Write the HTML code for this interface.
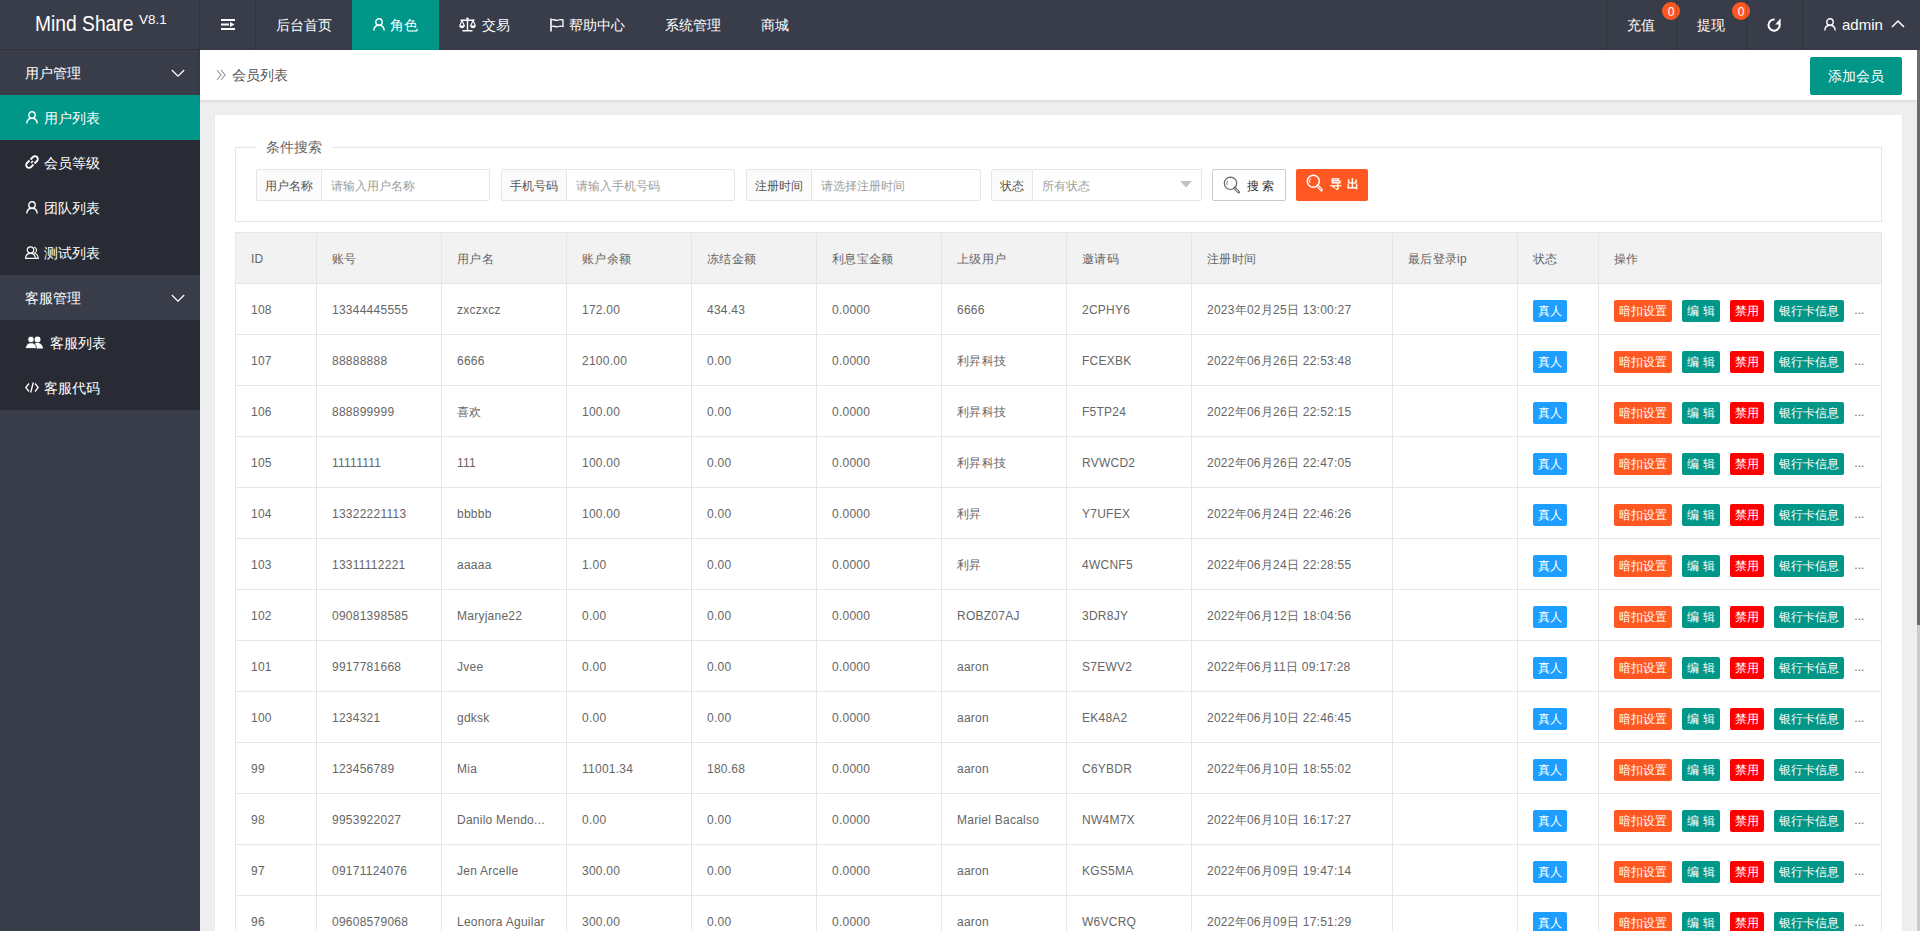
<!DOCTYPE html>
<html><head><meta charset="utf-8"><title>Mind Share</title>
<style>
*{box-sizing:border-box}
html,body{margin:0;padding:0}
body{width:1920px;height:931px;overflow:hidden;position:relative;background:#EEEEEE;font-family:"Liberation Sans",sans-serif;color:#666}
.abs{position:absolute}
#hd{left:0;top:0;width:1920px;height:50px;background:#393D49;color:#fff}
#hd .t{position:absolute;top:0;height:50px;line-height:50px;font-size:14px;color:#fff;white-space:nowrap}
#hd .sep{position:absolute;top:0;width:1px;height:50px;background:rgba(0,0,0,.16);z-index:2}
#logo{left:0;width:200px;text-align:center;font-size:20px!important}
#logo sup{font-size:12px;position:relative;top:-2px;margin-left:4px;font-weight:bold}
svg{display:block}
#sd{left:0;top:50px;width:200px;height:881px;background:#393D49}
#sd .it{position:absolute;left:0;width:200px;height:45px;line-height:47px;font-size:14px;color:#fff;white-space:nowrap}
#sd .dk{background:#282B33}
#sd .on{background:#009688}
#sd .it .tx{position:absolute;left:44px;top:0}
#sd .it svg{position:absolute}
#bc{left:200px;top:50px;width:1717px;height:50px;background:#fff;box-shadow:0 1px 3px rgba(0,0,0,.12)}
#card{left:215px;top:115px;width:1687px;height:830px;background:#fff;box-shadow:0 1px 2px rgba(0,0,0,.05)}
#fs{left:235px;top:147px;width:1647px;height:75px;border:1px solid #e6e6e6}
#lg{left:256px;top:138px;height:18px;line-height:18px;padding:0 10px;background:#fff;font-size:14px;color:#666}
.lab{position:absolute;top:169px;height:32px;line-height:30px;padding-top:1px;border:1px solid #e6e6e6;background:#FBFBFB;font-size:12px;color:#555;text-align:center;border-radius:2px 0 0 2px}
.inp{position:absolute;top:169px;height:32px;line-height:30px;padding-top:1px;border:1px solid #e6e6e6;background:#fff;font-size:12px;color:#9e9e9e;padding-left:9px;border-radius:0 2px 2px 0}
#tb{position:absolute;left:235px;top:232px;width:1647px;border-collapse:separate;border-spacing:0;table-layout:fixed;border-top:1px solid #e6e6e6;border-right:1px solid #e6e6e6}
#tb td,#tb th{letter-spacing:.25px;border-left:1px solid #e6e6e6;border-bottom:1px solid #e6e6e6;height:51px;padding:0 0 0 15px;font-size:12px;color:#666;font-weight:normal;text-align:left;white-space:nowrap;overflow:hidden}
#tb th{background:#F2F2F2;height:51px}
#tb td{background:#fff;padding-top:2px}
#tb th{padding-top:2px}
.b{letter-spacing:0;word-spacing:1px;display:inline-block;height:22px;line-height:22px;padding:0 5px;font-size:12px;color:#fff;border-radius:2px;margin-right:10px;vertical-align:middle;position:relative;top:1px}
.bl{background:#1E9FFF}.bo{background:#FF5722}.bg{background:#009688}.br{background:#FF0000}
.more{letter-spacing:0;display:inline-block;font-size:12px;color:#666;vertical-align:middle}
#sb1{left:1917px;top:50px;width:3px;height:575px;background:#6b6b6b}
#sb2{left:1917px;top:625px;width:3px;height:306px;background:#cbcbcb}
</style></head><body>
<div id="hd" class="abs">
  <div class="abs" style="left:35px;top:12px;font-size:21.5px;line-height:24px;color:#fff;white-space:nowrap;transform:scaleX(.895);transform-origin:0 0">Mind Share</div><div class="abs" style="left:139px;top:13px;font-size:13.5px;line-height:14px;color:#fff;white-space:nowrap">V8.1</div>
  <div class="sep" style="left:199px"></div><div class="abs" style="left:0;top:49px;width:200px;height:1px;background:#30333d"></div>
  <svg class="abs" style="left:221px;top:18px" width="15" height="13" viewBox="0 0 15 13"><rect x="0" y="1" width="14" height="2" fill="#fff"/><rect x="0" y="5.5" width="8" height="2" fill="#fff"/><path d="M9 4 L13.5 6.5 L9 9 Z" fill="#fff"/><rect x="0" y="10" width="14" height="2" fill="#fff"/></svg>
  <div class="sep" style="left:255px"></div>
  <div class="t" style="left:276px">后台首页</div>
  <div class="abs" style="left:352px;top:0;width:87px;height:50px;background:#009688"></div>
  <svg class="abs" style="left:373px;top:18px" width="12" height="13" viewBox="0 0 12 13"><circle cx="6" cy="4" r="3.2" fill="none" stroke="#fff" stroke-width="1.4"/><path d="M0.8 12.5 C1 8.8 3.2 7.3 6 7.3 C8.8 7.3 11 8.8 11.2 12.5" fill="none" stroke="#fff" stroke-width="1.4"/></svg>
  <div class="t" style="left:390px">角色</div>
  <svg class="abs" style="left:459px;top:17px" width="17" height="15" viewBox="0 0 17 15"><path d="M8.5 1 V13.5 M3.5 13.8 H13.5 M1.5 3.2 H15.5" stroke="#fff" stroke-width="1.4" fill="none"/><circle cx="8.5" cy="1.6" r="1.2" fill="#fff"/><path d="M3 3.5 L0.6 9 H5.4 Z M14 3.5 L11.6 9 H16.4 Z" fill="none" stroke="#fff" stroke-width="1.1"/><path d="M0.6 9 A2.4 2.2 0 0 0 5.4 9 Z M11.6 9 A2.4 2.2 0 0 0 16.4 9 Z" fill="#fff"/></svg>
  <div class="t" style="left:482px">交易</div>
  <svg class="abs" style="left:550px;top:18px" width="14" height="14" viewBox="0 0 14 14"><path d="M1 0.5 V13.5" stroke="#fff" stroke-width="1.6"/><path d="M1.5 2 C4 0.8 6 3.2 8.5 2 C10 1.3 11.5 1.6 13 2 V8.5 C11.5 8 10 7.8 8.5 8.5 C6 9.7 4 7.3 1.5 8.5" fill="none" stroke="#fff" stroke-width="1.3"/></svg>
  <div class="t" style="left:569px">帮助中心</div>
  <div class="t" style="left:665px">系统管理</div>
  <div class="t" style="left:761px">商城</div>
  <div class="sep" style="left:1606px"></div>
  <div class="t" style="left:1627px">充值</div>
  <div class="abs" style="left:1662px;top:2px;width:18px;height:18px;border-radius:50%;background:#FF5722;color:#fff;font-size:12px;line-height:20px;text-align:center">0</div>
  <div class="sep" style="left:1676px"></div>
  <div class="t" style="left:1697px">提现</div>
  <div class="abs" style="left:1732px;top:2px;width:18px;height:18px;border-radius:50%;background:#FF5722;color:#fff;font-size:12px;line-height:20px;text-align:center">0</div>
  <div class="sep" style="left:1746px"></div>
  <svg class="abs" style="left:1766px;top:17px" width="16" height="16" viewBox="0 0 16 16"><path d="M8.6 2.5 A5.6 5.6 0 1 0 13.5 6.8" fill="none" stroke="#fff" stroke-width="2"/><path d="M14.6 1.2 L14.6 7.4 L9.2 7.4 Z" fill="#fff"/></svg>
  <div class="sep" style="left:1802px"></div>
  <svg class="abs" style="left:1824px;top:18px" width="12" height="13" viewBox="0 0 12 13"><circle cx="6" cy="4" r="3.2" fill="none" stroke="#fff" stroke-width="1.4"/><path d="M0.8 12.5 C1 8.8 3.2 7.3 6 7.3 C8.8 7.3 11 8.8 11.2 12.5" fill="none" stroke="#fff" stroke-width="1.4"/></svg>
  <div class="t" style="left:1842px;font-size:15px">admin</div>
  <svg class="abs" style="left:1891px;top:19px" width="14" height="9" viewBox="0 0 14 9"><path d="M1 8 L7 2 L13 8" fill="none" stroke="#fff" stroke-width="1.5"/></svg>
</div>

<div id="sd" class="abs">
  <div class="it" style="top:0"><span class="tx" style="left:25px">用户管理</span><svg style="left:171px;top:19px" width="15" height="9" viewBox="0 0 15 9"><path d="M0.8 1 L7 7.2 L13.2 1" fill="none" stroke="#fff" stroke-width="1.25"/></svg></div>
  <div class="it on" style="top:45px"><svg style="left:26px;top:16px" width="12" height="13" viewBox="0 0 12 13"><circle cx="6" cy="4" r="3.2" fill="none" stroke="#fff" stroke-width="1.4"/><path d="M0.8 12.5 C1 8.8 3.2 7.3 6 7.3 C8.8 7.3 11 8.8 11.2 12.5" fill="none" stroke="#fff" stroke-width="1.4"/></svg><span class="tx">用户列表</span></div>
  <div class="it dk" style="top:90px"><svg style="left:25px;top:15px" width="14" height="14" viewBox="0 0 14 14"><path d="M6 8 L8 6" stroke="#fff" stroke-width="1.6"/><path d="M5.5 4.5 L8 2 A2.3 2.3 0 0 1 12 6 L9.5 8.5" fill="none" stroke="#fff" stroke-width="1.8"/><path d="M8.5 9.5 L6 12 A2.3 2.3 0 0 1 2 8 L4.5 5.5" fill="none" stroke="#fff" stroke-width="1.8"/></svg><span class="tx">会员等级</span></div>
  <div class="it dk" style="top:135px"><svg style="left:26px;top:16px" width="12" height="13" viewBox="0 0 12 13"><circle cx="6" cy="4" r="3.2" fill="none" stroke="#fff" stroke-width="1.4"/><path d="M0.8 12.5 C1 8.8 3.2 7.3 6 7.3 C8.8 7.3 11 8.8 11.2 12.5" fill="none" stroke="#fff" stroke-width="1.4"/></svg><span class="tx">团队列表</span></div>
  <div class="it dk" style="top:180px"><svg style="left:25px;top:16px" width="14" height="13" viewBox="0 0 14 13"><circle cx="5.5" cy="4" r="3.2" fill="none" stroke="#fff" stroke-width="1.2"/><path d="M0.6 12.4 C0.8 8.8 3 7.3 5.5 7.3 C8 7.3 10.2 8.8 10.4 12.4 Z" fill="none" stroke="#fff" stroke-width="1.2"/><path d="M9 1.2 A3 3 0 0 1 9.5 7 C11.5 7.5 13 9 13.3 12.4 H11" fill="none" stroke="#fff" stroke-width="1.1"/></svg><span class="tx">测试列表</span></div>
  <div class="it" style="top:225px"><span class="tx" style="left:25px">客服管理</span><svg style="left:171px;top:19px" width="15" height="9" viewBox="0 0 15 9"><path d="M0.8 1 L7 7.2 L13.2 1" fill="none" stroke="#fff" stroke-width="1.25"/></svg></div>
  <div class="it dk" style="top:270px"><svg style="left:25px;top:16px" width="19" height="13" viewBox="0 0 19 13"><circle cx="12.5" cy="3.5" r="3" fill="#fff"/><path d="M7.5 12.5 C7.8 8.5 10 7 12.5 7 C15 7 17.6 8.5 18 12.5 Z" fill="#fff"/><circle cx="6" cy="3.5" r="3.2" fill="#fff" stroke="#282B33" stroke-width="0.8"/><path d="M0.5 12.5 C0.8 8.3 3.3 6.8 6 6.8 C8.7 6.8 11.2 8.3 11.5 12.5 Z" fill="#fff" stroke="#282B33" stroke-width="0.8"/></svg><span class="tx" style="left:50px">客服列表</span></div>
  <div class="it dk" style="top:315px"><svg style="left:25px;top:17px" width="14" height="11" viewBox="0 0 14 11"><path d="M4 1.5 L0.8 5.5 L4 9.5 M10 1.5 L13.2 5.5 L10 9.5 M8.3 0.5 L5.7 10.5" fill="none" stroke="#fff" stroke-width="1.3"/></svg><span class="tx">客服代码</span></div>
</div>

<div id="bc" class="abs">
  <svg class="abs" style="left:16px;top:19px" width="10" height="12" viewBox="0 0 10 12"><path d="M1 1 L5 6 L1 11 M5 1 L9 6 L5 11" fill="none" stroke="#999" stroke-width="1.2"/></svg>
  <div class="abs" style="left:32px;top:0;line-height:50px;font-size:14px;color:#555">会员列表</div>
  <div class="abs" style="left:1610px;top:7px;width:92px;height:38px;line-height:38px;background:#009688;color:#fff;font-size:14px;text-align:center;border-radius:2px">添加会员</div>
</div>

<div id="card" class="abs"></div>
<div id="fs" class="abs"></div>
<div id="lg" class="abs">条件搜索</div>

<div class="lab" style="left:256px;width:66px">用户名称</div><div class="inp" style="left:321px;width:169px">请输入用户名称</div>
<div class="lab" style="left:501px;width:66px">手机号码</div><div class="inp" style="left:566px;width:169px">请输入手机号码</div>
<div class="lab" style="left:746px;width:66px">注册时间</div><div class="inp" style="left:811px;width:170px">请选择注册时间</div>
<div class="lab" style="left:991px;width:42px">状态</div><div class="inp" style="left:1032px;width:170px">所有状态</div>
<svg class="abs" style="left:1180px;top:181px" width="12" height="7" viewBox="0 0 12 7"><path d="M0 0 H12 L6 6.5 Z" fill="#c2c2c2"/></svg>
<div class="abs" style="left:1212px;top:169px;width:74px;height:32px;border:1px solid #C9C9C9;border-radius:2px;background:#fff"></div>
<svg class="abs" style="left:1223px;top:176px" width="18" height="18" viewBox="0 0 18 18"><circle cx="7.5" cy="7.3" r="6.2" fill="none" stroke="#666" stroke-width="1.2"/><path d="M11.6 12 L15.6 16.2" stroke="#666" stroke-width="2.6" stroke-linecap="round"/><path d="M12 12.4 L15.2 15.8" stroke="#fff" stroke-width="0.9" stroke-linecap="round"/><path d="M4.3 9 A3.5 3.5 0 0 1 4.8 4.8" fill="none" stroke="#666" stroke-width="0.9"/></svg>
<div class="abs" style="left:1247px;top:170px;line-height:32px;font-size:12px;color:#333">搜 索</div>
<div class="abs" style="left:1296px;top:169px;width:72px;height:32px;border-radius:2px;background:#FF5722"></div>
<svg class="abs" style="left:1306px;top:174px" width="18" height="18" viewBox="0 0 18 18"><circle cx="7.3" cy="7.2" r="6" fill="none" stroke="#fff" stroke-width="1.5"/><path d="M11.5 11.8 L15.3 15.8" stroke="#fff" stroke-width="3" stroke-linecap="round"/><path d="M11.9 12.2 L14.9 15.4" stroke="#FF5722" stroke-width="1" stroke-linecap="round"/><path d="M4.1 9 A3.5 3.5 0 0 1 4.6 4.6" fill="none" stroke="#fff" stroke-width="1"/></svg>
<div class="abs" style="left:1330px;top:168px;line-height:32px;font-size:12px;color:#fff;font-weight:bold;letter-spacing:1px">导 出</div>

<table id="tb">
<colgroup><col style="width:81px"><col style="width:125px"><col style="width:125px"><col style="width:125px"><col style="width:125px"><col style="width:125px"><col style="width:125px"><col style="width:125px"><col style="width:201px"><col style="width:125px"><col style="width:81px"><col style="width:283px"></colgroup>
<tr><th>ID</th><th>账号</th><th>用户名</th><th>账户余额</th><th>冻结金额</th><th>利息宝金额</th><th>上级用户</th><th>邀请码</th><th>注册时间</th><th>最后登录ip</th><th>状态</th><th>操作</th></tr>
<tr><td><div class="c">108</div></td><td><div class="c">13344445555</div></td><td><div class="c">zxczxcz</div></td><td><div class="c">172.00</div></td><td><div class="c">434.43</div></td><td><div class="c">0.0000</div></td><td><div class="c">6666</div></td><td><div class="c">2CPHY6</div></td><td><div class="c">2023年02月25日 13:00:27</div></td><td></td><td><span class="b bl">真人</span></td><td><span class="b bo">暗扣设置</span><span class="b bg">编 辑</span><span class="b br">禁用</span><span class="b bg">银行卡信息</span><span class="more">...</span></td></tr>
<tr><td><div class="c">107</div></td><td><div class="c">88888888</div></td><td><div class="c">6666</div></td><td><div class="c">2100.00</div></td><td><div class="c">0.00</div></td><td><div class="c">0.0000</div></td><td><div class="c">利昇科技</div></td><td><div class="c">FCEXBK</div></td><td><div class="c">2022年06月26日 22:53:48</div></td><td></td><td><span class="b bl">真人</span></td><td><span class="b bo">暗扣设置</span><span class="b bg">编 辑</span><span class="b br">禁用</span><span class="b bg">银行卡信息</span><span class="more">...</span></td></tr>
<tr><td><div class="c">106</div></td><td><div class="c">888899999</div></td><td><div class="c">喜欢</div></td><td><div class="c">100.00</div></td><td><div class="c">0.00</div></td><td><div class="c">0.0000</div></td><td><div class="c">利昇科技</div></td><td><div class="c">F5TP24</div></td><td><div class="c">2022年06月26日 22:52:15</div></td><td></td><td><span class="b bl">真人</span></td><td><span class="b bo">暗扣设置</span><span class="b bg">编 辑</span><span class="b br">禁用</span><span class="b bg">银行卡信息</span><span class="more">...</span></td></tr>
<tr><td><div class="c">105</div></td><td><div class="c">11111111</div></td><td><div class="c">111</div></td><td><div class="c">100.00</div></td><td><div class="c">0.00</div></td><td><div class="c">0.0000</div></td><td><div class="c">利昇科技</div></td><td><div class="c">RVWCD2</div></td><td><div class="c">2022年06月26日 22:47:05</div></td><td></td><td><span class="b bl">真人</span></td><td><span class="b bo">暗扣设置</span><span class="b bg">编 辑</span><span class="b br">禁用</span><span class="b bg">银行卡信息</span><span class="more">...</span></td></tr>
<tr><td><div class="c">104</div></td><td><div class="c">13322221113</div></td><td><div class="c">bbbbb</div></td><td><div class="c">100.00</div></td><td><div class="c">0.00</div></td><td><div class="c">0.0000</div></td><td><div class="c">利昇</div></td><td><div class="c">Y7UFEX</div></td><td><div class="c">2022年06月24日 22:46:26</div></td><td></td><td><span class="b bl">真人</span></td><td><span class="b bo">暗扣设置</span><span class="b bg">编 辑</span><span class="b br">禁用</span><span class="b bg">银行卡信息</span><span class="more">...</span></td></tr>
<tr><td><div class="c">103</div></td><td><div class="c">13311112221</div></td><td><div class="c">aaaaa</div></td><td><div class="c">1.00</div></td><td><div class="c">0.00</div></td><td><div class="c">0.0000</div></td><td><div class="c">利昇</div></td><td><div class="c">4WCNF5</div></td><td><div class="c">2022年06月24日 22:28:55</div></td><td></td><td><span class="b bl">真人</span></td><td><span class="b bo">暗扣设置</span><span class="b bg">编 辑</span><span class="b br">禁用</span><span class="b bg">银行卡信息</span><span class="more">...</span></td></tr>
<tr><td><div class="c">102</div></td><td><div class="c">09081398585</div></td><td><div class="c">Maryjane22</div></td><td><div class="c">0.00</div></td><td><div class="c">0.00</div></td><td><div class="c">0.0000</div></td><td><div class="c">ROBZ07AJ</div></td><td><div class="c">3DR8JY</div></td><td><div class="c">2022年06月12日 18:04:56</div></td><td></td><td><span class="b bl">真人</span></td><td><span class="b bo">暗扣设置</span><span class="b bg">编 辑</span><span class="b br">禁用</span><span class="b bg">银行卡信息</span><span class="more">...</span></td></tr>
<tr><td><div class="c">101</div></td><td><div class="c">9917781668</div></td><td><div class="c">Jvee</div></td><td><div class="c">0.00</div></td><td><div class="c">0.00</div></td><td><div class="c">0.0000</div></td><td><div class="c">aaron</div></td><td><div class="c">S7EWV2</div></td><td><div class="c">2022年06月11日 09:17:28</div></td><td></td><td><span class="b bl">真人</span></td><td><span class="b bo">暗扣设置</span><span class="b bg">编 辑</span><span class="b br">禁用</span><span class="b bg">银行卡信息</span><span class="more">...</span></td></tr>
<tr><td><div class="c">100</div></td><td><div class="c">1234321</div></td><td><div class="c">gdksk</div></td><td><div class="c">0.00</div></td><td><div class="c">0.00</div></td><td><div class="c">0.0000</div></td><td><div class="c">aaron</div></td><td><div class="c">EK48A2</div></td><td><div class="c">2022年06月10日 22:46:45</div></td><td></td><td><span class="b bl">真人</span></td><td><span class="b bo">暗扣设置</span><span class="b bg">编 辑</span><span class="b br">禁用</span><span class="b bg">银行卡信息</span><span class="more">...</span></td></tr>
<tr><td><div class="c">99</div></td><td><div class="c">123456789</div></td><td><div class="c">Mia</div></td><td><div class="c">11001.34</div></td><td><div class="c">180.68</div></td><td><div class="c">0.0000</div></td><td><div class="c">aaron</div></td><td><div class="c">C6YBDR</div></td><td><div class="c">2022年06月10日 18:55:02</div></td><td></td><td><span class="b bl">真人</span></td><td><span class="b bo">暗扣设置</span><span class="b bg">编 辑</span><span class="b br">禁用</span><span class="b bg">银行卡信息</span><span class="more">...</span></td></tr>
<tr><td><div class="c">98</div></td><td><div class="c">9953922027</div></td><td><div class="c">Danilo Mendo...</div></td><td><div class="c">0.00</div></td><td><div class="c">0.00</div></td><td><div class="c">0.0000</div></td><td><div class="c">Mariel Bacalso</div></td><td><div class="c">NW4M7X</div></td><td><div class="c">2022年06月10日 16:17:27</div></td><td></td><td><span class="b bl">真人</span></td><td><span class="b bo">暗扣设置</span><span class="b bg">编 辑</span><span class="b br">禁用</span><span class="b bg">银行卡信息</span><span class="more">...</span></td></tr>
<tr><td><div class="c">97</div></td><td><div class="c">09171124076</div></td><td><div class="c">Jen Arcelle</div></td><td><div class="c">300.00</div></td><td><div class="c">0.00</div></td><td><div class="c">0.0000</div></td><td><div class="c">aaron</div></td><td><div class="c">KGS5MA</div></td><td><div class="c">2022年06月09日 19:47:14</div></td><td></td><td><span class="b bl">真人</span></td><td><span class="b bo">暗扣设置</span><span class="b bg">编 辑</span><span class="b br">禁用</span><span class="b bg">银行卡信息</span><span class="more">...</span></td></tr>
<tr><td><div class="c">96</div></td><td><div class="c">09608579068</div></td><td><div class="c">Leonora Aguilar</div></td><td><div class="c">300.00</div></td><td><div class="c">0.00</div></td><td><div class="c">0.0000</div></td><td><div class="c">aaron</div></td><td><div class="c">W6VCRQ</div></td><td><div class="c">2022年06月09日 17:51:29</div></td><td></td><td><span class="b bl">真人</span></td><td><span class="b bo">暗扣设置</span><span class="b bg">编 辑</span><span class="b br">禁用</span><span class="b bg">银行卡信息</span><span class="more">...</span></td></tr>
</table>

<div id="sb1" class="abs"></div>
<div id="sb2" class="abs"></div>
</body></html>
